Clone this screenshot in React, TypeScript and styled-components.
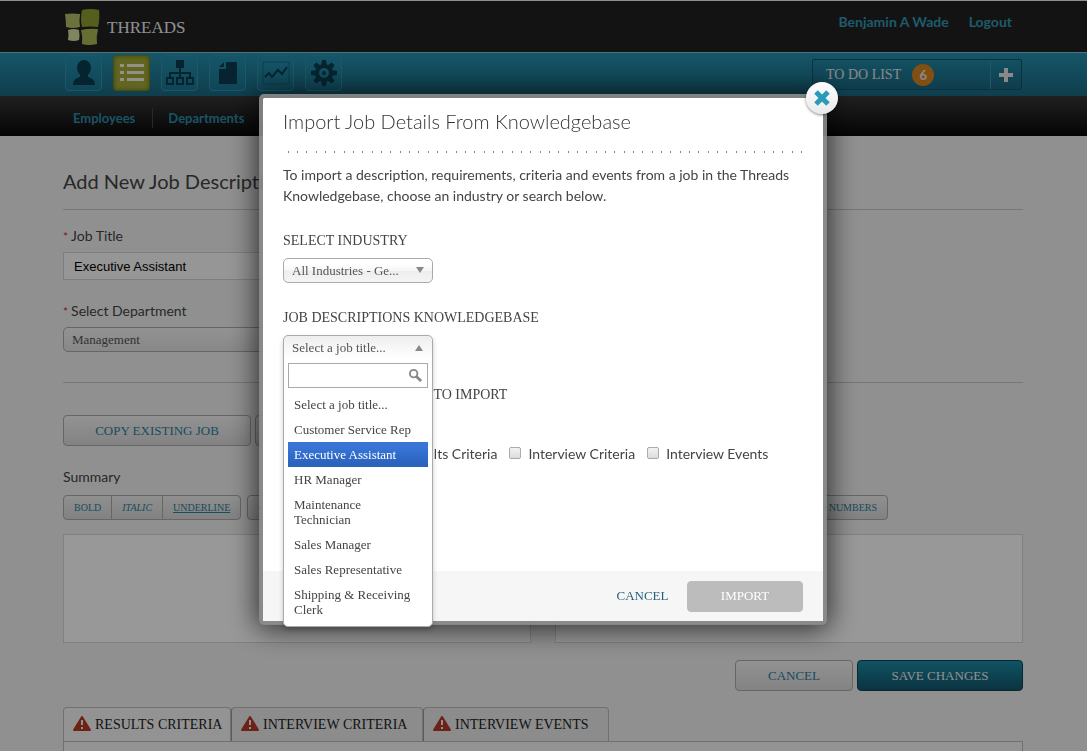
import React from "react";
import styled, { createGlobalStyle, css } from "styled-components";

const slab = `"Liberation Serif", serif`;
const sans = `Lato, "Open Sans", sans-serif`;

const GlobalStyle = createGlobalStyle`
  *, *::before, *::after { box-sizing: border-box; }
  body { margin: 0; background: #f0f0f0; color: #444; font-family: ${sans}; font-size: 14px; line-height: 20px; }
  h1, h2, h3, p, ul { margin: 0; padding: 0; font-weight: 400; }
  ul { list-style: none; }
  a { color: inherit; text-decoration: none; }
  button, input, select, textarea { font: inherit; color: inherit; margin: 0; }
  button { cursor: pointer; }
`;

/* ---------- Page shell ---------- */

const Page = styled.div`
  min-height: 100vh;
  display: flex;
  flex-direction: column;
`;

const Container = styled.div`
  width: 100%;
  max-width: 961px;
  margin: 0 auto;
  padding-right: 1px;
`;

const TopBar = styled.header`
  background: #212121;
  border-top: 1px solid #eee;
`;

const TopRow = styled(Container)`
  height: 51px;
  display: flex;
  justify-content: space-between;
  align-items: center;
`;

const Brand = styled.a`
  display: flex;
  align-items: center;
  gap: 7px;
  padding: 2px 2px 0;
  font: 17px/20px ${slab};
  color: #eee;
`;

const AccountLinks = styled.nav`
  display: flex;
  gap: 20px;
  padding: 0 11px 10px 0;
  font-weight: 700;
  color: #3297b4;
`;

const NavBar = styled.nav`
  background: linear-gradient(#248fae, #1a6880);
  border-top: 1px solid #7cc4d6;
`;

const NavRow = styled(Container)`
  height: 43px;
  display: flex;
  justify-content: space-between;
  align-items: center;
`;

const IconTabs = styled.div`
  display: flex;
  gap: 11px;
  padding: 0 2px 3px;
`;

const IconTab = styled.button<{ $active?: boolean }>`
  width: 37px;
  height: 36px;
  padding: 0;
  display: grid;
  place-items: center;
  color: #0a3d4f;
  background: linear-gradient(#238fae, #1a7591);
  border: 1px solid #3391ad;
  border-radius: 4px;
  ${(p) =>
    p.$active &&
    css`
      color: #f4f4dc;
      background: #a3ab3a;
      border-color: #79801e;
      box-shadow: inset 0 0 4px #6b7218;
    `}
`;

const Todo = styled.div`
  display: flex;
  width: 210px;
  height: 31px;
  margin-right: 1px;
  color: #e4e4e4;
  background: linear-gradient(#1f87a5, #19667f);
  border: 1px solid #0f526a;
  border-radius: 2px;
`;

const TodoLink = styled.a`
  flex: 1;
  display: flex;
  align-items: center;
  gap: 11px;
  padding-left: 13px;
  font: 14px/20px ${slab};
`;

const Count = styled.span`
  width: 22px;
  height: 22px;
  border-radius: 50%;
  background: #d98420;
  font: 700 13px/22px ${sans};
  text-align: center;
`;

const AddButton = styled.button`
  width: 31px;
  padding: 0;
  display: grid;
  place-items: center;
  background: none;
  border: 0;
  border-left: 1px solid #2f93ae;
`;

const SubNav = styled.nav`
  background: linear-gradient(#363636, #080808);
`;

const SubNavRow = styled(Container)`
  height: 40px;
  display: flex;
  align-items: center;
  padding: 4px 0 0 10px;
  color: #2c8ba8;
  font-size: 13px;
  font-weight: 700;
`;

const SubLink = styled.a`
  padding: 0 17px 0 0;
  & + & {
    padding: 0 15px;
    border-left: 1px solid #454545;
  }
`;

/* ---------- Form ---------- */

const Main = styled(Container)`
  flex: 1;
  display: flex;
  flex-direction: column;
  padding-top: 31px;
`;

const PageTitle = styled.h1`
  font-size: 20px;
  line-height: 28px;
  padding-bottom: 14px;
  border-bottom: 1px solid #c6c6c6;
`;

const Field = styled.div<{ $top: number }>`
  display: flex;
  flex-direction: column;
  align-items: flex-start;
  gap: 5px;
  margin-top: ${(p) => p.$top}px;
`;

const Required = styled.span`
  color: #d22;
  font-size: 12px;
  margin-right: 3px;
`;

const TextInput = styled.input`
  width: 300px;
  height: 28px;
  padding: 0 10px;
  font: 13px/16px "Liberation Sans", Arial, sans-serif;
  color: #000;
  background: #fafafa;
  border: 1px solid #d2d2d2;
`;

const Select = styled.select<{ $width: number; $tone?: "grey" }>`
  appearance: none;
  width: ${(p) => p.$width}px;
  height: 25px;
  padding: 0 28px 0 8px;
  font: 13px/18px ${slab};
  color: #555;
  background: ${(p) =>
    p.$tone === "grey"
      ? "linear-gradient(#f4f4f4, #e2e2e2)"
      : "linear-gradient(#fff 20%, #f6f6f6 50%, #eee 52%, #f4f4f4)"};
  border: 1px solid #aaa;
  border-radius: 5px;
`;

const Rule = styled.hr`
  width: 100%;
  margin: 30px 0 32px;
  border: 0;
  border-top: 1px solid #c6c6c6;
`;

const ButtonRow = styled.div<{ $end?: boolean; $top?: number }>`
  display: flex;
  gap: 4px;
  justify-content: ${(p) => (p.$end ? "flex-end" : "flex-start")};
  margin-top: ${(p) => p.$top ?? 0}px;
`;

type Tone = "light" | "teal" | "muted" | "plain";

const tones = {
  light: css`
    color: #27819b;
    background: linear-gradient(#f4f4f4, #dadada);
    border-color: #aaa;
  `,
  teal: css`
    color: #f0f0f0;
    background: linear-gradient(#1c8ba8, #13566b);
    border-color: #0c4254;
  `,
  muted: css`
    color: #fff;
    background: #bcbcbc;
    border-color: #bcbcbc;
  `,
  plain: css`
    color: #27607c;
    background: none;
    border-color: transparent;
  `,
};

const Button = styled.button<{ $tone: Tone; $width: number }>`
  width: ${(p) => p.$width}px;
  height: 31px;
  padding: 0;
  font: 13px/20px ${slab};
  border: 1px solid;
  border-radius: 4px;
  ${(p) => tones[p.$tone]}
`;

const Editors = styled.div`
  display: grid;
  grid-template-columns: 1fr 1fr;
  gap: 24px;
  margin-top: 21px;
`;

const Editor = styled.div`
  display: flex;
  flex-direction: column;
`;

const Tools = styled.div`
  display: flex;
  gap: 6px;
  margin: 8px 0 14px;
`;

const ToolGroup = styled.div`
  display: flex;
  height: 25px;
  background: linear-gradient(#f0f0f0, #d8d8d8);
  border: 1px solid #aaa;
  border-radius: 4px;
`;

const Tool = styled.button<{ $look?: "italic" | "underline" }>`
  padding: 0 10px;
  font: 10px/14px ${slab};
  font-style: ${(p) => (p.$look === "italic" ? "italic" : "normal")};
  text-decoration: ${(p) => (p.$look === "underline" ? "underline" : "none")};
  color: #27819b;
  background: none;
  border: 0;
  & + & {
    border-left: 1px solid #aaa;
  }
`;

const TextArea = styled.textarea`
  display: block;
  width: 100%;
  height: 109px;
  resize: none;
  background: #fdfdfd;
  border: 1px solid #d6d6d6;
`;

const Tabs = styled.div`
  display: flex;
  margin-top: 16px;
`;

const Tab = styled.button<{ $active?: boolean; $width: number }>`
  width: ${(p) => p.$width}px;
  height: 35px;
  margin-bottom: -1px;
  padding: 0 0 0 9px;
  display: flex;
  align-items: center;
  gap: 4px;
  white-space: nowrap;
  font: 14px/20px ${slab};
  color: #222;
  background: ${(p) => (p.$active ? "#f6f6f6" : "#e9e9e9")};
  border: 1px solid #bbb;
  border-bottom-color: ${(p) => (p.$active ? "#f6f6f6" : "#bbb")};
  border-radius: 4px 4px 0 0;
  & + & {
    border-left-color: #999;
  }
`;

const TabPanel = styled.div`
  flex: 1;
  background: #f6f6f6;
  border: 1px solid #bbb;
  border-bottom: 0;
`;

/* ---------- Dialog ---------- */

const Backdrop = styled.div`
  position: fixed;
  inset: 0;
  display: flex;
  justify-content: center;
  align-items: flex-start;
  padding: 94px 1px 0 0;
  background: rgba(0, 0, 0, 0.4);
`;

const Dialog = styled.section`
  position: relative;
  width: 568px;
  background: #fff;
  background-clip: padding-box;
  border: 4px solid rgba(136, 138, 138, 0.92);
  border-radius: 5px;
  box-shadow: 0 2px 28px 2px rgba(0, 0, 0, 0.7);
`;

const CloseButton = styled.button`
  position: absolute;
  top: -16px;
  right: -15px;
  width: 32px;
  height: 32px;
  padding: 0;
  display: grid;
  place-items: center;
  background: linear-gradient(#fff, #e9e9e9);
  border: 0;
  border-radius: 50%;
  box-shadow: 0 1px 3px rgba(0, 0, 0, 0.5);
`;

const DialogBody = styled.div`
  padding: 9px 20px 107px;
`;

const DialogTitle = styled.h2`
  font-size: 20px;
  line-height: 28px;
  font-weight: 300;
  color: #333;
`;

const Dots = styled.svg`
  display: block;
  width: 100%;
  height: 2px;
  margin: 16px 0 11px;
  padding-left: 5px;
`;

const Intro = styled.p`
  line-height: 21px;
`;

const DialogField = styled.div`
  margin-top: 25px;
`;

const DialogLabel = styled.label`
  display: block;
  margin-bottom: 7px;
  font: 14px/20px ${slab};
  color: #444;
`;

const SelectWrap = styled.div`
  position: relative;
  width: 150px;
  height: 25px;
`;

const Arrow = styled.svg`
  position: absolute;
  right: 9px;
  top: 9px;
  fill: #888;
  pointer-events: none;
`;

const Combo = styled.div`
  position: absolute;
  z-index: 1;
  top: 0;
  left: 0;
  width: 150px;
  padding: 0 4px 4px;
  background: #fff linear-gradient(#eee, #fff) no-repeat top / 100% 22px;
  border: 1px solid #aaa;
  border-radius: 5px;
  box-shadow: 0 3px 5px rgba(0, 0, 0, 0.2);
  font: 13px/15px ${slab};
`;

const ComboTrigger = styled.button`
  display: block;
  width: 100%;
  height: 23px;
  padding: 0 4px;
  text-align: left;
  color: #555;
  background: none;
  border: 0;
`;

const SearchBox = styled.div`
  display: flex;
  align-items: center;
  height: 25px;
  margin: 4px 0;
  padding-right: 5px;
  background: #fff;
  border: 1px solid #aaa;
`;

const SearchInput = styled.input`
  flex: 1;
  min-width: 0;
  padding: 0 4px;
  background: none;
  border: 0;
  outline: 0;
`;

const Option = styled.li<{ $active?: boolean }>`
  padding: 5px 14px 5px 6px;
  ${(p) =>
    p.$active &&
    css`
      color: #fff;
      background: linear-gradient(#3875d7 20%, #2a62bc 90%);
    `}
`;

const Choices = styled.fieldset`
  display: flex;
  gap: 12px;
  margin: 39px 0 0;
  padding: 0;
  border: 0;
`;

const Choice = styled.label`
  display: flex;
  align-items: center;
  gap: 7px;
  white-space: nowrap;
`;

const Checkbox = styled.input`
  appearance: none;
  width: 12px;
  height: 12px;
  margin-bottom: 3px;
  background: linear-gradient(#f2f2f2, #dcdcdc);
  border: 1px solid #aaa;
  border-radius: 2px;
`;

const DialogFooter = styled.footer`
  display: flex;
  justify-content: flex-end;
  align-items: center;
  gap: 4px;
  height: 50px;
  padding: 0 20px;
  background: #f6f6f6;
`;

/* ---------- Icons ---------- */

const Logo = () => (
  <svg width="35" height="37" viewBox="0 0 35 37" aria-hidden="true">
    <path d="M0 5 Q7 4 15 5 Q14 12 15 18 Q8 20 1 18 Q1 12 0 5Z" fill="#b5bf66" />
    <path d="M17 1 Q26 -1 34 1 Q35 10 33 18 Q25 17 17 18 Q15 10 17 1Z" fill="#8f9d33" />
    <path d="M3 21 Q9 19 14 21 Q15 27 14 31 Q9 33 3 31 Q4 26 3 21Z" fill="#d5dc9f" />
    <path d="M16 21 Q25 19 33 20 Q31 28 32 35 Q24 37 17 35 Q18 28 16 21Z" fill="#adb854" />
  </svg>
);

const PersonIcon = () => (
  <svg width="24" height="26" viewBox="0 0 24 26" fill="currentColor">
    <ellipse cx="12" cy="8" rx="7" ry="8" />
    <path d="M8 14h8v3c4 1 7 3 7 8H1c0-5 3-7 7-8z" />
  </svg>
);

const ListIcon = () => (
  <svg width="24" height="20" viewBox="0 0 24 20" fill="currentColor">
    <path d="M0 1h4v3H0zM7 1h17v3H7zM0 8h4v3H0zM7 8h17v3H7zM0 15h4v3H0zM7 15h17v3H7z" />
  </svg>
);

const TreeIcon = () => (
  <svg width="30" height="26" viewBox="0 0 30 26" fill="none" stroke="currentColor" strokeWidth="2">
    <path d="M12 1h6v6h-6z" fill="currentColor" />
    <path d="M15 8v9M5 17v-4h20v4" />
    <path d="M2 18h6v6H2zM12 18h6v6h-6zM22 18h6v6h-6z" />
  </svg>
);

const DocIcon = () => (
  <svg width="20" height="24" viewBox="0 0 20 24" fill="currentColor">
    <path d="M8 1h11v22H1V8h7zM6 1v5H1z" />
  </svg>
);

const ChartIcon = () => (
  <svg width="28" height="24" viewBox="0 0 28 24" fill="none" stroke="currentColor">
    <path d="M1 1h26v22H1z" strokeOpacity="0.4" />
    <path d="M3 16l4-4 3 4 6-7 4 4 5-7" strokeWidth="2" />
  </svg>
);

const GearIcon = () => (
  <svg width="26" height="26" viewBox="-13 -13 26 26">
    {[0, 45, 90, 135, 180, 225, 270, 315].map((a) => (
      <path key={a} d="M-3 -7L-2 -13H2L3 -7z" fill="currentColor" transform={`rotate(${a})`} />
    ))}
    <circle r="7" fill="none" stroke="currentColor" strokeWidth="4" />
    <circle r="2" fill="currentColor" />
  </svg>
);

const PlusIcon = () => (
  <svg width="14" height="14" viewBox="0 0 14 14" fill="currentColor">
    <path d="M5 0h4v5h5v4H9v5H5V9H0V5h5z" />
  </svg>
);

const CloseIcon = () => (
  <svg width="16" height="16" viewBox="0 0 16 16" stroke="#2b9aba" strokeWidth="5">
    <path d="M2 2l12 12M14 2L2 14" />
  </svg>
);

const SearchIcon = () => (
  <svg width="13" height="13" viewBox="0 0 14 14" fill="none" stroke="#888" strokeWidth="2">
    <circle cx="5" cy="5" r="4" />
    <path d="M8 8l5 5" strokeWidth="3" />
  </svg>
);

const WarningIcon = () => (
  <svg width="18" height="20" viewBox="0 0 18 20" aria-hidden="true">
    <path d="M9 2L17 15H1z" fill="#b53a24" stroke="#b53a24" strokeWidth="2" strokeLinejoin="round" />
    <path d="M8 5h2v5H8zM8 12h2v2H8z" fill="#eee" />
  </svg>
);

/* ---------- Data ---------- */

const sections = [
  { name: "People", icon: <PersonIcon /> },
  { name: "Jobs", icon: <ListIcon />, active: true },
  { name: "Organisation", icon: <TreeIcon /> },
  { name: "Documents", icon: <DocIcon /> },
  { name: "Reports", icon: <ChartIcon /> },
  { name: "Settings", icon: <GearIcon /> },
];

const jobTitles = [
  "Select a job title...",
  "Customer Service Rep",
  "Executive Assistant",
  "HR Manager",
  "Maintenance Technician",
  "Sales Manager",
  "Sales Representative",
  "Shipping & Receiving Clerk",
];

const importItems = ["Description", "Results Criteria", "Interview Criteria", "Interview Events"];

const tabs = [
  { name: "RESULTS CRITERIA", width: 168, active: true },
  { name: "INTERVIEW CRITERIA", width: 192 },
  { name: "INTERVIEW EVENTS", width: 186 },
];

const RichText = ({ id, label }: { id: string; label: string }) => (
  <Editor>
    <label htmlFor={id}>{label}</label>
    <Tools>
      <ToolGroup>
        <Tool>BOLD</Tool>
        <Tool $look="italic">ITALIC</Tool>
        <Tool $look="underline">UNDERLINE</Tool>
      </ToolGroup>
      <ToolGroup>
        <Tool>• BULLETS</Tool>
        <Tool># NUMBERS</Tool>
      </ToolGroup>
    </Tools>
    <TextArea id={id} />
  </Editor>
);

export default function App() {
  return (
    <>
      <GlobalStyle />
      <Page>
        <TopBar>
          <TopRow>
            <Brand href="#">
              <Logo />
              THREADS
            </Brand>
            <AccountLinks>
              <a href="#">Benjamin A Wade</a>
              <a href="#">Logout</a>
            </AccountLinks>
          </TopRow>
        </TopBar>
        <NavBar>
          <NavRow>
            <IconTabs>
              {sections.map((s) => (
                <IconTab key={s.name} $active={s.active} aria-label={s.name}>
                  {s.icon}
                </IconTab>
              ))}
            </IconTabs>
            <Todo>
              <TodoLink href="#">
                TO DO LIST <Count>6</Count>
              </TodoLink>
              <AddButton aria-label="Add to do">
                <PlusIcon />
              </AddButton>
            </Todo>
          </NavRow>
        </NavBar>
        <SubNav>
          <SubNavRow>
            <SubLink href="#">Employees</SubLink>
            <SubLink href="#">Departments</SubLink>
          </SubNavRow>
        </SubNav>

        <Main as="main">
          <PageTitle>Add New Job Description</PageTitle>
          <Field $top={16}>
            <label htmlFor="title">
              <Required>*</Required>Job Title
            </label>
            <TextInput id="title" defaultValue="Executive Assistant" />
          </Field>
          <Field $top={21}>
            <label htmlFor="department">
              <Required>*</Required>Select Department
            </label>
            <Select id="department" $width={300} $tone="grey">
              <option>Management</option>
            </Select>
          </Field>
          <Rule />
          <ButtonRow>
            <Button $tone="light" $width={188}>COPY EXISTING JOB</Button>
            <Button $tone="light" $width={188}>IMPORT JOB</Button>
          </ButtonRow>
          <Editors>
            <RichText id="summary" label="Summary" />
            <RichText id="requirements" label="Requirements" />
          </Editors>
          <ButtonRow $end $top={17}>
            <Button $tone="light" $width={118}>CANCEL</Button>
            <Button $tone="teal" $width={166}>SAVE CHANGES</Button>
          </ButtonRow>
          <Tabs>
            {tabs.map((t) => (
              <Tab key={t.name} $active={t.active} $width={t.width}>
                <WarningIcon />
                {t.name}
              </Tab>
            ))}
          </Tabs>
          <TabPanel />
        </Main>
      </Page>

      <Backdrop>
        <Dialog role="dialog" aria-labelledby="dialog-title">
          <CloseButton aria-label="Close">
            <CloseIcon />
          </CloseButton>
          <DialogBody>
            <DialogTitle id="dialog-title">Import Job Details From Knowledgebase</DialogTitle>
            <Dots>
              <line x1="0" x2="100%" y1="1" y2="1" stroke="#888" strokeWidth="2" strokeDasharray="1 8 1 8 1 9" />
            </Dots>
            <Intro>
              To import a description, requirements, criteria and events from a job in the Threads
              Knowledgebase, choose an industry or search below.
            </Intro>
            <DialogField>
              <DialogLabel htmlFor="industry">SELECT INDUSTRY</DialogLabel>
              <SelectWrap>
                <Select id="industry" $width={150}>
                  <option>All Industries - Ge...</option>
                </Select>
                <Arrow width="8" height="6" viewBox="0 0 8 6">
                  <path d="M0 0h8L4 6z" />
                </Arrow>
              </SelectWrap>
            </DialogField>
            <DialogField>
              <DialogLabel htmlFor="job">JOB DESCRIPTIONS KNOWLEDGEBASE</DialogLabel>
              <SelectWrap>
                <Combo>
                  <ComboTrigger id="job" aria-haspopup="listbox" aria-expanded="true">
                    Select a job title...
                  </ComboTrigger>
                  <Arrow width="8" height="6" viewBox="0 0 8 6">
                    <path d="M4 0l4 6H0z" />
                  </Arrow>
                  <SearchBox>
                    <SearchInput aria-label="Search job titles" />
                    <SearchIcon />
                  </SearchBox>
                  <ul role="listbox" aria-label="Job titles">
                    {jobTitles.map((t) => (
                      <Option key={t} role="option" $active={t === "Executive Assistant"}>
                        {t}
                      </Option>
                    ))}
                  </ul>
                </Combo>
              </SelectWrap>
            </DialogField>
            <DialogField>
              <DialogLabel as="h3">CHOOSE THE DETAILS TO IMPORT</DialogLabel>
            </DialogField>
            <Choices>
              {importItems.map((c) => (
                <Choice key={c}>
                  <Checkbox type="checkbox" />
                  {c}
                </Choice>
              ))}
            </Choices>
          </DialogBody>
          <DialogFooter>
            <Button $tone="plain" $width={81}>CANCEL</Button>
            <Button $tone="muted" $width={116}>IMPORT</Button>
          </DialogFooter>
        </Dialog>
      </Backdrop>
    </>
  );
}
